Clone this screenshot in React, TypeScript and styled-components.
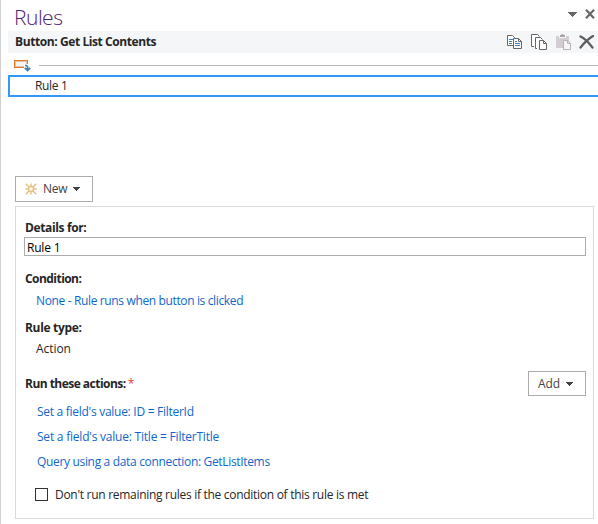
import React from "react";
import styled, { createGlobalStyle } from "styled-components";

const Global = createGlobalStyle`
  * { box-sizing: border-box; }
  html, body { margin: 0; padding: 0; background: #fff; overflow: hidden; }
  body { font-family: "Open Sans", "Noto Sans", sans-serif; font-size: 12px; color: #262626; }
  svg { display: block; flex: none; }
`;

const Pane = styled.div`
  width: 598px;
  height: 524px;
  border-left: 1px solid #d2d2d2;
  background: #fff;
  overflow: hidden;
`;

const TitleBar = styled.header`
  display: flex;
  justify-content: space-between;
  height: 31px;
  padding: 4px 3px 0 13px;
`;

const Title = styled.h1`
  margin: 0;
  font-size: 21px;
  line-height: 26px;
  font-weight: 300;
  color: #4f2270;
  letter-spacing: -0.5px;
`;

const WindowButtons = styled.div`
  display: flex;
  align-items: flex-start;
  gap: 8px;
  padding-top: 5px;
`;

const Text = styled.span<{ $spacing?: number; $bold?: boolean; $color?: string }>`
  white-space: nowrap;
  line-height: 16px;
  letter-spacing: ${(p) => p.$spacing ?? 0}px;
  font-weight: ${(p) => (p.$bold ? 700 : 400)};
  color: ${(p) => p.$color ?? "#262626"};
`;

const ContextBar = styled.div`
  display: flex;
  justify-content: space-between;
  height: 22px;
  margin-left: 7px;
  padding: 3px 3px 0 7px;
  background: #f4f6f8;
`;

const Tools = styled.div`
  display: flex;
`;

const GroupHeader = styled.div`
  display: flex;
  height: 22px;
  padding: 7px 0 0 13px;
  gap: 8px;
`;

const Divider = styled.div`
  flex: 1;
  height: 1px;
  margin-top: 5px;
  background: #bababa;
`;

const RuleRow = styled.div`
  height: 22px;
  margin-left: 7px;
  padding: 1px 0 0 25px;
  border: 2px solid #3399f8;
  border-right: 0;
  display: flex;
`;

const Button = styled.button<{ $width: number; $height: number }>`
  display: flex;
  align-items: center;
  width: ${(p) => p.$width}px;
  height: ${(p) => p.$height}px;
  padding: 0 0 0 9px;
  border: 1px solid #ababab;
  background: #fff;
  font: inherit;
`;

const NewArea = styled.div`
  padding: 79px 0 0 14px;
`;

const Details = styled.section`
  display: flex;
  flex-direction: column;
  width: 579px;
  height: 313px;
  margin: 4px 0 0 14px;
  padding: 13px 7px 0 8px;
  border: 1px solid #dadada;
`;

const Line = styled.div<{ $height: number; $indent?: number }>`
  display: flex;
  flex: none;
  align-items: flex-start;
  height: ${(p) => p.$height}px;
  padding-left: ${(p) => p.$indent ?? 1}px;
`;

const NameInput = styled.div`
  display: flex;
  flex: none;
  height: 19px;
  padding: 2px 0 0 2px;
  border: 1px solid #ababab;
  margin-bottom: 15px;
`;

const ActionsHeader = styled.div`
  display: flex;
  flex: none;
  justify-content: space-between;
  height: 33px;
  padding-left: 1px;
`;

const HeaderLabel = styled.div`
  display: flex;
  gap: 2px;
  padding-top: 5px;
`;

const CheckLine = styled.label`
  display: flex;
  gap: 7px;
  padding-left: 11px;
  margin-top: 8px;
`;

const Box = styled.span`
  width: 13px;
  height: 13px;
  margin-top: 1px;
  border: 1px solid #333;
`;

const Link = (p: { s: number; children: React.ReactNode }) => (
  <Text $color="#0f67cc" $spacing={p.s}>{p.children}</Text>
);

const Caret = ({ color = "#666" }: { color?: string }) => (
  <svg width="9" height="5" viewBox="0 0 9 5" shapeRendering="crispEdges">
    <path d="M0 0H9V1H8V2H7V3H6V4H5V5H4V4H3V3H2V2H1V1H0Z" fill={color} />
  </svg>
);

const SmallCaret = () => (
  <svg width="7" height="4" viewBox="0 0 7 4" shapeRendering="crispEdges">
    <path d="M0 0H7V1H6V2H5V3H4V4H3V3H2V2H1V1H0Z" fill="#444" />
  </svg>
);

const Cross = () => (
  <svg width="10" height="10" viewBox="0 0 10 10">
    <path d="M1 .8L9 9.2M9 .8L1 9.2" stroke="#666" strokeWidth="2.2" />
  </svg>
);

const CopyIcon = () => (
  <svg width="16" height="16" viewBox="0 0 16 16" fill="#fff" stroke="#666">
    <path d="M.5 1.5H5.500L7.500 3.500V11.500H.5Z" />
    <path d="M2 5.500H6M2 7.500H5M2 9.500H5" stroke="#3f7dbb" />
    <path d="M6.500 4.500H11.500L14.500 7.500V14.500H6.500Z" />
    <path d="M11.500 4.500V7.500H14.500" fill="none" />
    <path d="M8 7.500H10M8 9.500H13M8 11.500H13" stroke="#3f7dbb" />
  </svg>
);

const CopyAllIcon = () => (
  <svg width="17" height="16" viewBox="0 0 17 16" fill="#fff" stroke="#666">
    <path d="M3 12.500H.5V.5H6.500L8.500 2.500" />
    <path d="M6 14.500H4.500V3.500H9.500L11.500 5.500" />
    <path d="M8.500 6.500H12.500L15.500 9.500V15.500H8.500Z" />
    <path d="M12.500 6.500V9.500H15.500" fill="none" />
  </svg>
);

const PasteIcon = () => (
  <svg width="16" height="16" viewBox="0 0 16 16">
    <path d="M0 2H3V4H10V2H13V7H7V14H0Z" fill="#d3ced3" />
    <path d="M4 3V1H5.500V0H7.500V1H9V3Z" fill="#aaa5aa" />
    <path d="M7.500 6.500H11.500L14.500 9.500V15.500H7.500Z" fill="#f7f6f8" stroke="#b7b2b7" />
    <path d="M11.500 6.500V9.500H14.500" fill="none" stroke="#b7b2b7" />
  </svg>
);

const DeleteIcon = () => (
  <svg width="16" height="14" viewBox="0 0 16 14">
    <path d="M1.500 1.500C5 3 10 8 13.500 12.500" fill="none" stroke="#5e5e5e" strokeWidth="2.300" strokeLinecap="round" />
    <path d="M14 1C9 4 5 8 1.500 12.500" fill="none" stroke="#5e5e5e" strokeWidth="2.300" strokeLinecap="round" />
  </svg>
);

const TriggerIcon = () => (
  <svg width="17" height="12" viewBox="0 0 17 12">
    <rect x=".5" y=".5" width="13" height="7" fill="#f4f4f4" stroke="#e57a1e" />
    <rect x="1.500" y="1.500" width="11" height="5" fill="#f4f4f4" stroke="#dfc3ae" />
    <path d="M10 4H17V12H10Z" fill="#fff" />
    <path d="M11 5.500H12.500L13.500 6.500V10.500M10.800 7.800L13.500 10.500L16.200 7.800" fill="none" stroke="#437bb4" strokeWidth="1.700" />
  </svg>
);

const SparkIcon = () => (
  <svg width="12" height="12" viewBox="0 0 12 12" stroke="#e8bd7e" fill="none" strokeWidth="1.400">
    <rect x="3.700" y="3.700" width="4.600" height="4.600" />
    <path d="M6 .5V3.500M6 8.500V11.500M.5 6H3.500M8.500 6H11.500M.8 .8L4 4M8 8L11.200 11.200M11.200 .8L8 4M4 8L.8 11.200" />
  </svg>
);

const Place = styled.span<{ $left?: number; $top?: number }>`
  display: flex;
  margin-left: ${(p) => p.$left ?? 0}px;
  margin-top: ${(p) => p.$top ?? 0}px;
`;

export default function App() {
  return (
    <>
      <Global />
      <Pane>
        <TitleBar>
          <Title>Rules</Title>
          <WindowButtons>
            <Place $top={3}><Caret /></Place>
            <Cross />
          </WindowButtons>
        </TitleBar>
        <ContextBar>
          <Text $bold $spacing={-0.41}>Button: Get List Contents</Text>
          <Tools>
            <CopyIcon />
            <Place $left={8}><CopyAllIcon /></Place>
            <Place $left={8}><PasteIcon /></Place>
            <Place $left={7} $top={1}><DeleteIcon /></Place>
          </Tools>
        </ContextBar>
        <GroupHeader>
          <TriggerIcon />
          <Divider />
        </GroupHeader>
        <RuleRow><Text $spacing={-0.35}>Rule 1</Text></RuleRow>
        <NewArea>
          <Button $width={78} $height={26}>
            <SparkIcon />
            <Place $left={6}><Text $color="#444" $spacing={-0.3}>New</Text></Place>
            <Place $left={6}><SmallCaret /></Place>
          </Button>
        </NewArea>
        <Details>
          <Line $height={17}><Text $bold $spacing={-0.37}>Details for:</Text></Line>
          <NameInput><Text $color="#000" $spacing={-0.2}>Rule 1</Text></NameInput>
          <Line $height={22}><Text $bold $spacing={-0.55}>Condition:</Text></Line>
          <Line $height={27} $indent={12}><Link s={-0.36}>None - Rule runs when button is clicked</Link></Line>
          <Line $height={21}><Text $bold $spacing={-0.32}>Rule type:</Text></Line>
          <Line $height={30} $indent={12}><Text $spacing={-0.05}>Action</Text></Line>
          <ActionsHeader>
            <HeaderLabel>
              <Text $bold $spacing={-0.53}>Run these actions:</Text>
              <Text $color="#e03c31">*</Text>
            </HeaderLabel>
            <Button $width={58} $height={25}>
              <Text $color="#444" $spacing={-0.1}>Add</Text>
              <Place $left={6}><SmallCaret /></Place>
            </Button>
          </ActionsHeader>
          <Line $height={25} $indent={13}><Link s={-0.28}>Set a field's value: ID = FilterId</Link></Line>
          <Line $height={25} $indent={13}><Link s={-0.22}>Set a field's value: Title = FilterTitle</Link></Line>
          <Line $height={25} $indent={13}><Link s={-0.33}>Query using a data connection: GetListItems</Link></Line>
          <CheckLine>
            <Box />
            <Text $spacing={-0.29}>Don't run remaining rules if the condition of this rule is met</Text>
          </CheckLine>
        </Details>
      </Pane>
    </>
  );
}
